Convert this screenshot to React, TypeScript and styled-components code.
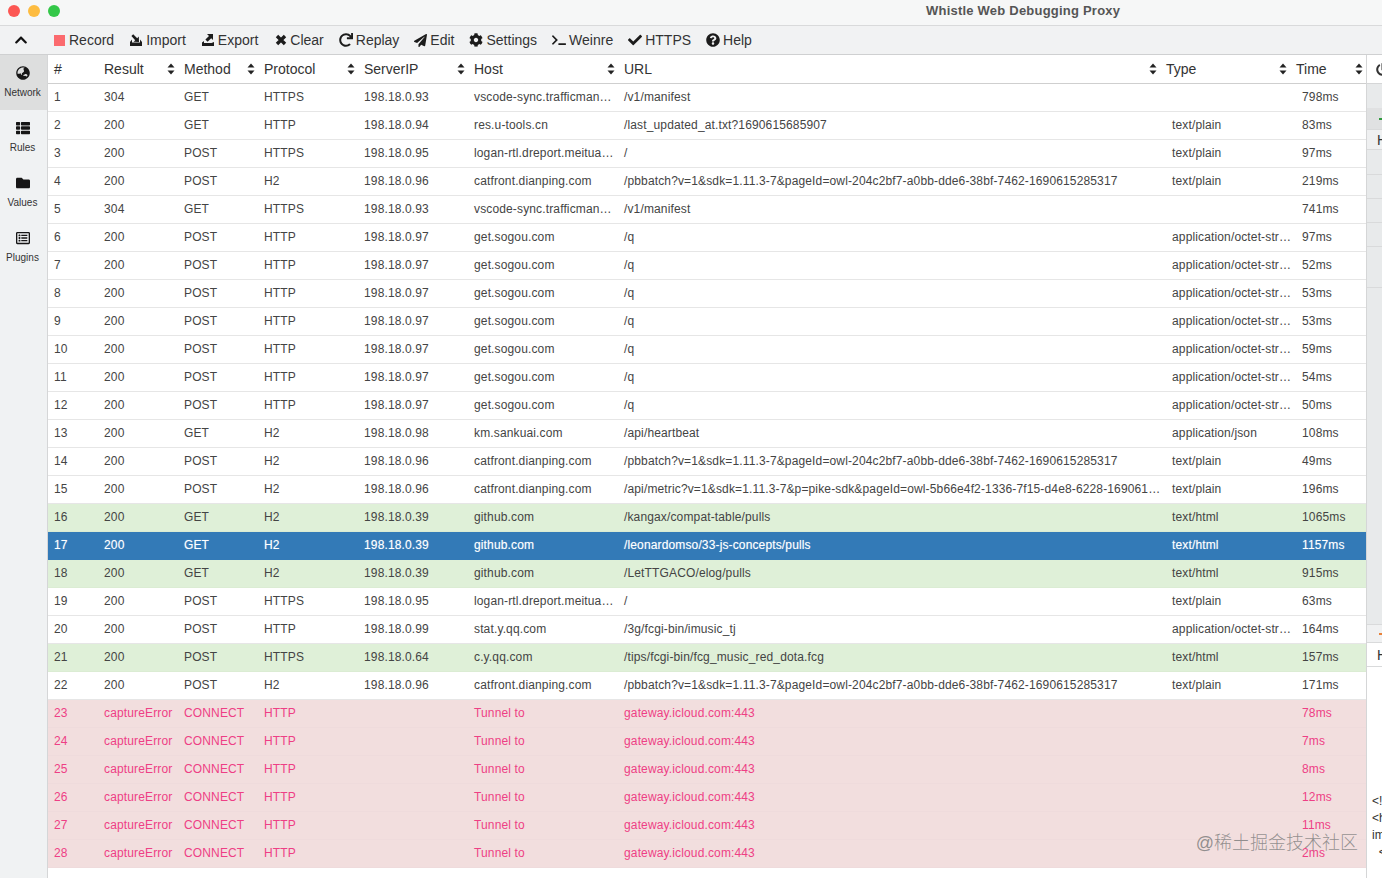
import React from 'react';
import styled, { createGlobalStyle } from 'styled-components';
import { FaChevronUp, FaRedo, FaPaperPlane, FaCog, FaTerminal, FaCheck, FaQuestionCircle, FaGlobeAsia, FaThList, FaFolder, FaRegListAlt, FaPowerOff } from 'react-icons/fa';

const Global = createGlobalStyle`
  html, body { margin: 0; padding: 0; height: 100%; overflow: hidden; background: #fff; }
  body { font-family: "Liberation Sans", Arial, sans-serif; }
  * { box-sizing: border-box; }
`;

const Page = styled.div`
  width: 1382px; height: 878px; display: flex; flex-direction: column; position: relative; overflow: hidden;
`;
const TitleBar = styled.div`
  height: 26px; flex: none; display: flex; align-items: flex-start; padding: 5px 0 0 8px;
  background: #f6f7f7; border-bottom: 1px solid #d9dadb;
`;
const Lights = styled.div`display: flex; gap: 8px; width: 918px;`;
const Light = styled.span<{ $c: string }>`width: 12px; height: 12px; border-radius: 50%; background: ${p => p.$c};`;
const Title = styled.div`font-size: 13px; line-height: 13px; margin-top: -1px; font-weight: 700; color: #555; white-space: nowrap; letter-spacing: 0.22px;`;
const Toolbar = styled.div`
  height: 29px; flex: none; display: flex; align-items: center; background: #f1f2f3; border-bottom: 1px solid #cfd0d1;
  font-size: 14px; color: #333;
`;
const Toggle = styled.div`width: 54px; padding-left: 14px; display: flex; align-items: center; color: #111;`;
const Actions = styled.div`display: flex; gap: 15px; align-items: center;`;
const Action = styled.div<{ $shift?: number }>`
  display: flex; align-items: center; gap: 3px; white-space: nowrap; height: 20px; margin-left: ${p => p.$shift || 0}px;
  & > svg { flex: none; color: #1c1c1c; }
`;
const RecordDot = styled.span`width: 11px; height: 11px; background: #fb6a6e; margin-right: 1px;`;

const Body = styled.div`flex: 1; display: flex; min-height: 0;`;
const Sidebar = styled.nav`width: 48px; flex: none; background: #f0f2f3; border-right: 1px solid #d5d6d7;`;
const NavItem = styled.div<{ $active?: boolean }>`
  height: 55px; display: flex; flex-direction: column; align-items: center; padding: 11px 2px 0 0; gap: 7px;
  background: ${p => (p.$active ? '#dddede' : 'transparent')}; font-size: 10px; line-height: 12px; color: #333;
  & > svg { color: #161616; }
`;
const Table = styled.main`width: 1318px; flex: none; display: flex; flex-direction: column;`;
const Header = styled.div`
  display: grid; grid-template-columns: 50px 80px 80px 100px 110px 150px 542px 130px 76px;
  height: 29px; flex: none; background: #fff; border-bottom: 1px solid #cfcfcf; font-size: 14px; color: #333;
`;
const HeadCell = styled.div`display: flex; align-items: center; justify-content: space-between; padding: 0 3px 0 6px; position: relative;`;
const Row = styled.div<{ $kind: string }>`
  display: grid; grid-template-columns: 50px 80px 80px 100px 110px 150px 548px 130px 70px;
  height: 28px; flex: none; align-items: center; font-size: 12px; padding-bottom: 1px; letter-spacing: 0.14px;
  border-bottom: 1px solid ${p => (p.$kind === 'sel' ? '#337ab7' : p.$kind === 'err' ? '#efdbdc' : p.$kind === 'ok' ? '#dbecd3' : '#e6e6e6')};
  color: ${p => (p.$kind === 'sel' ? '#fff' : p.$kind === 'err' ? '#ee3f85' : '#444')};
  background: ${p => (p.$kind === 'sel' ? '#337ab7' : p.$kind === 'err' ? '#f2dede' : p.$kind === 'ok' ? '#dff0d8' : '#fff')};
  text-shadow: ${p => (p.$kind === 'sel' ? '0 0 1px rgba(255,255,255,.45)' : 'none')};
`;
const Cell = styled.div`padding: 0 2px 0 6px; white-space: nowrap; overflow: hidden; text-overflow: ellipsis;`;

const Side = styled.aside`flex: 1; display: flex; flex-direction: column; border-left: 1px solid #d5d6d7; font-size: 14px; color: #333; overflow: hidden;`;
const SideHead = styled.div`height: 29px; flex: none; display: flex; align-items: center; padding-left: 9px; border-bottom: 1px solid #d5d6d7; background: #fff; & > svg { color: #333; flex: none; }`;
const Band = styled.div<{ $h: number; $bg: string; $line?: string }>`
  height: ${p => p.$h}px; flex: none; background: ${p => p.$bg}; border-bottom: 1px solid ${p => p.$line || 'transparent'};
  display: flex; align-items: center; padding-left: 10px; white-space: nowrap; color: #333;
`;
const Marker = styled.span<{ $c: string }>`width: 5px; height: 2px; background: ${p => p.$c}; margin-left: 2px; flex: none;`;
const Code = styled.pre`margin: 126px 0 0 5px; font: 12px/17px "Liberation Sans", Arial, sans-serif; color: #333;`;
const Watermark = styled.div`
  position: absolute; right: 24px; top: 830px; font-size: 18px; line-height: 26px; white-space: nowrap;
  color: rgba(120, 120, 120, 0.78); font-family: "Liberation Sans", "Noto Sans CJK SC", sans-serif; font-weight: 300;
`;

const SortIcon = () => (
  <svg width="8" height="12" viewBox="0 0 8 12" aria-hidden="true">
    <path d="M4 0.5 7.5 4.5H0.5Z M4 11.5 0.5 7.5H7.5Z" fill="#222" />
  </svg>
);
const ImportIcon = () => (
  <svg width="14" height="14" viewBox="0 0 14 14" aria-hidden="true">
    <path d="M4.2 1.2 8.2 5.2 9.8 3.6 10 9 4.6 8.8 6.2 7.2 2.4 3Z" fill="#1c1c1c" />
    <path d="M3 6.5V9.5H11V6.5L13 9V13H1V9Z" fill="#1c1c1c" />
  </svg>
);
const ExportIcon = () => (
  <svg width="14" height="14" viewBox="0 0 14 14" aria-hidden="true">
    <path d="M6 1H12V7L10.2 5.2 6.6 8.8 4.4 6.6 8 3Z" fill="#1c1c1c" />
    <path d="M1 9.5 3 8V10H10.5L13 9V13H1Z" fill="#1c1c1c" />
  </svg>
);
const ClearIcon = () => (
  <svg width="12" height="12" viewBox="0 0 12 12" aria-hidden="true">
    <path d="M2 2 10 10 M10 2 2 10" stroke="#1c1c1c" strokeWidth="3.4" fill="none" />
  </svg>
);

type R = [string, string, string, string, string, string, string, string, string, string?];
const vs = 'vscode-sync.trafficmanager.net';
const lg = 'logan-rtl.dreport.meituan.net';
const cf = 'catfront.dianping.com';
const pb = '/pbbatch?v=1&sdk=1.11.3-7&pageId=owl-204c2bf7-a0bb-dde6-38bf-7462-1690615285317';
const os = 'application/octet-stream';
const tp = 'text/plain';
const sg = (n: number, t: string): R => [String(n), '200', 'POST', 'HTTP', '198.18.0.97', 'get.sogou.com', '/q', os, t];
const er = (n: number, t: string): R => [String(n), 'captureError', 'CONNECT', 'HTTP', '', 'Tunnel to', 'gateway.icloud.com:443', '', t, 'err'];
const rows: R[] = [
  ['1', '304', 'GET', 'HTTPS', '198.18.0.93', vs, '/v1/manifest', '', '798ms'],
  ['2', '200', 'GET', 'HTTP', '198.18.0.94', 'res.u-tools.cn', '/last_updated_at.txt?1690615685907', tp, '83ms'],
  ['3', '200', 'POST', 'HTTPS', '198.18.0.95', lg, '/', tp, '97ms'],
  ['4', '200', 'POST', 'H2', '198.18.0.96', cf, pb, tp, '219ms'],
  ['5', '304', 'GET', 'HTTPS', '198.18.0.93', vs, '/v1/manifest', '', '741ms'],
  sg(6, '97ms'), sg(7, '52ms'), sg(8, '53ms'), sg(9, '53ms'), sg(10, '59ms'), sg(11, '54ms'), sg(12, '50ms'),
  ['13', '200', 'GET', 'H2', '198.18.0.98', 'km.sankuai.com', '/api/heartbeat', 'application/json', '108ms'],
  ['14', '200', 'POST', 'H2', '198.18.0.96', cf, pb, tp, '49ms'],
  ['15', '200', 'POST', 'H2', '198.18.0.96', cf, '/api/metric?v=1&sdk=1.11.3-7&p=pike-sdk&pageId=owl-5b66e4f2-1336-7f15-d4e8-6228-1690615285317', tp, '196ms'],
  ['16', '200', 'GET', 'H2', '198.18.0.39', 'github.com', '/kangax/compat-table/pulls', 'text/html', '1065ms', 'ok'],
  ['17', '200', 'GET', 'H2', '198.18.0.39', 'github.com', '/leonardomso/33-js-concepts/pulls', 'text/html', '1157ms', 'sel'],
  ['18', '200', 'GET', 'H2', '198.18.0.39', 'github.com', '/LetTTGACO/elog/pulls', 'text/html', '915ms', 'ok'],
  ['19', '200', 'POST', 'HTTPS', '198.18.0.95', lg, '/', tp, '63ms'],
  ['20', '200', 'POST', 'HTTP', '198.18.0.99', 'stat.y.qq.com', '/3g/fcgi-bin/imusic_tj', os, '164ms'],
  ['21', '200', 'POST', 'HTTPS', '198.18.0.64', 'c.y.qq.com', '/tips/fcgi-bin/fcg_music_red_dota.fcg', 'text/html', '157ms', 'ok'],
  ['22', '200', 'POST', 'H2', '198.18.0.96', cf, pb, tp, '171ms'],
  er(23, '78ms'), er(24, '7ms'), er(25, '8ms'), er(26, '12ms'), er(27, '11ms'), er(28, '2ms'),
];
const heads: [string, boolean][] = [['#', false], ['Result', true], ['Method', true], ['Protocol', true], ['ServerIP', true], ['Host', true], ['URL', true], ['Type', true], ['Time', true]];
const gray = '#e8eaeb';
const grayLine = '#d9dadb';

export default function App() {
  return (
    <Page>
      <Global />
      <TitleBar>
        <Lights>
          <Light $c="#fc5753" /><Light $c="#fdbc40" /><Light $c="#33c748" />
        </Lights>
        <Title>Whistle Web Debugging Proxy</Title>
      </TitleBar>
      <Toolbar>
        <Toggle><FaChevronUp size={14} /></Toggle>
        <Actions>
          <Action><RecordDot />Record</Action>
          <Action><ImportIcon />Import</Action>
          <Action><ExportIcon />Export</Action>
          <Action $shift={2}><ClearIcon />Clear</Action>
          <Action><FaRedo size={14} />Replay</Action>
          <Action><FaPaperPlane size={13} />Edit</Action>
          <Action><FaCog size={14} />Settings</Action>
          <Action><FaTerminal size={14} />Weinre</Action>
          <Action><FaCheck size={14} />HTTPS</Action>
          <Action><FaQuestionCircle size={14} />Help</Action>
        </Actions>
      </Toolbar>
      <Body>
        <Sidebar>
          <NavItem $active><FaGlobeAsia size={14} />Network</NavItem>
          <NavItem><FaThList size={14} />Rules</NavItem>
          <NavItem><FaFolder size={14} />Values</NavItem>
          <NavItem><FaRegListAlt size={14} />Plugins</NavItem>
        </Sidebar>
        <Table>
          <Header>
            {heads.map(([h, s]) => (
              <HeadCell key={h}>{h}{s && <SortIcon />}</HeadCell>
            ))}
          </Header>
          {rows.map(r => (
            <Row key={r[0]} $kind={r[9] || ''}>
              {r.slice(0, 9).map((c, i) => <Cell key={i}>{c}</Cell>)}
            </Row>
          ))}
        </Table>
        <Side>
          <SideHead><FaPowerOff size={13} /></SideHead>
          <Band $h={24} $bg={gray} />
          <Band $h={22} $bg="#e0e1e2" $line={grayLine}><Marker $c="#2e9a3e" /></Band>
          <Band $h={20} $bg="#eff0f1" $line={grayLine}>H</Band>
          <Band $h={25} $bg={gray} $line={grayLine} />
          <Band $h={24} $bg={gray} $line={grayLine} />
          <Band $h={24} $bg={gray} $line={grayLine} />
          <Band $h={24} $bg={gray} $line={grayLine} />
          <Band $h={41} $bg={gray} $line={grayLine} />
          <Band $h={337} $bg={gray} $line={grayLine} />
          <Band $h={18} $bg="#f0f1f2" $line={grayLine}><Marker $c="#e8823a" /></Band>
          <Band $h={24} $bg="#fff" $line={grayLine}>H</Band>
          <Code>{'<!\n<h\nim\n  <'}</Code>
        </Side>
      </Body>
      <Watermark>@稀土掘金技术社区</Watermark>
    </Page>
  );
}
